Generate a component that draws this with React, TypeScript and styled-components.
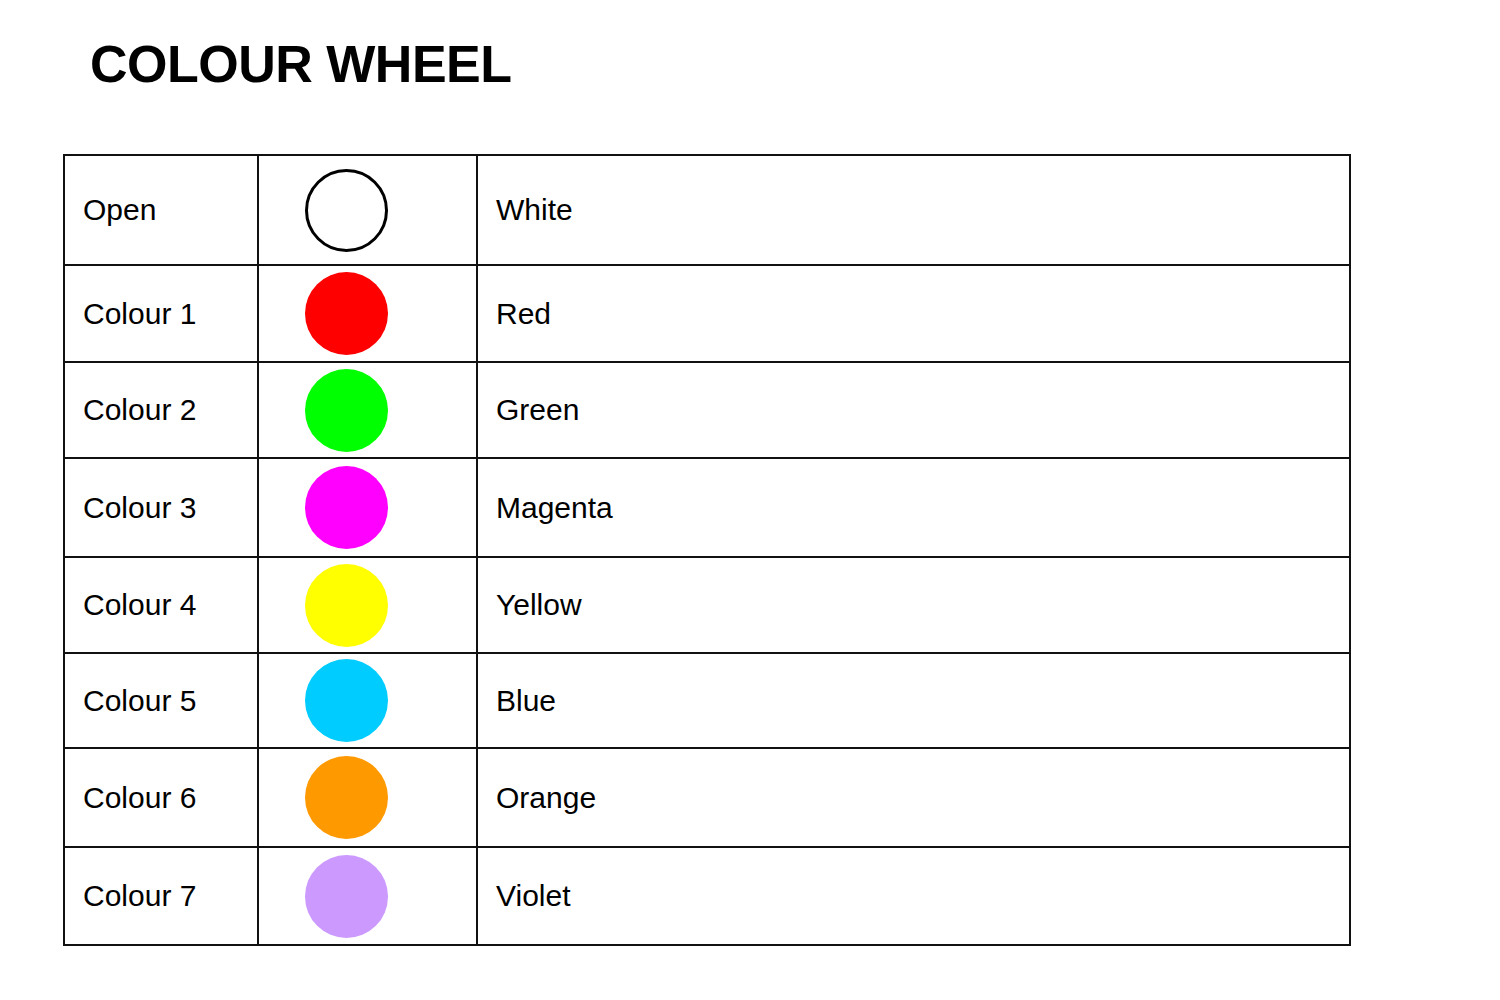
import styled, { createGlobalStyle } from "styled-components";

const GlobalStyle = createGlobalStyle`
  html, body {
    margin: 0;
    padding: 0;
    background: #fff;
  }
  body {
    font-family: "Liberation Sans", Arial, sans-serif;
    color: #000;
  }
`;

type Swatch = {
  label: string;
  colour: string;
  name: string;
  height: number;
};

const swatches: Swatch[] = [
  { label: "Open", colour: "#ffffff", name: "White", height: 110 },
  { label: "Colour 1", colour: "#ff0000", name: "Red", height: 97 },
  { label: "Colour 2", colour: "#00ff00", name: "Green", height: 96 },
  { label: "Colour 3", colour: "#ff00ff", name: "Magenta", height: 99 },
  { label: "Colour 4", colour: "#ffff00", name: "Yellow", height: 96 },
  { label: "Colour 5", colour: "#00ccff", name: "Blue", height: 95 },
  { label: "Colour 6", colour: "#ff9900", name: "Orange", height: 99 },
  { label: "Colour 7", colour: "#cc99ff", name: "Violet", height: 98 },
];

export default function App() {
  return (
    <>
      <GlobalStyle />
      <Page>
        <Title>COLOUR WHEEL</Title>
        <Table>
          <colgroup>
            <col style={{ width: 194 }} />
            <col style={{ width: 219 }} />
            <col />
          </colgroup>
          <tbody>
            {swatches.map((s) => (
              <Row key={s.label} $height={s.height}>
                <TextCell>{s.label}</TextCell>
                <DotCell>
                  <Dot $colour={s.colour} $outlined={s.colour === "#ffffff"} />
                </DotCell>
                <TextCell>{s.name}</TextCell>
              </Row>
            ))}
          </tbody>
        </Table>
      </Page>
    </>
  );
}

const Page = styled.main`
  width: 1500px;
  height: 1000px;
  box-sizing: border-box;
  padding: 36px 0 0 63px;
`;

const Title = styled.h1`
  margin: 0 0 62px 27px;
  font-size: 52px;
  font-weight: 700;
  line-height: 56px;
  letter-spacing: -0.5px;
`;

const Table = styled.table`
  width: 1288px;
  border-collapse: collapse;
  table-layout: fixed;
  border: 2px solid #111;
`;

const Row = styled.tr<{ $height: number }>`
  height: ${({ $height }) => $height}px;

  & > td {
    border: 2px solid #111;
  }
`;

const TextCell = styled.td`
  padding: 0 18px;
  font-size: 30px;
  vertical-align: middle;
  white-space: nowrap;
`;

const DotCell = styled.td`
  padding: 0;
  vertical-align: middle;
`;

const Dot = styled.div<{ $colour: string; $outlined: boolean }>`
  width: 83px;
  height: 83px;
  margin-left: 46px;
  box-sizing: border-box;
  border-radius: 50%;
  background: ${({ $colour }) => $colour};
  border: ${({ $outlined }) => ($outlined ? "3px solid #000" : "none")};
`;
